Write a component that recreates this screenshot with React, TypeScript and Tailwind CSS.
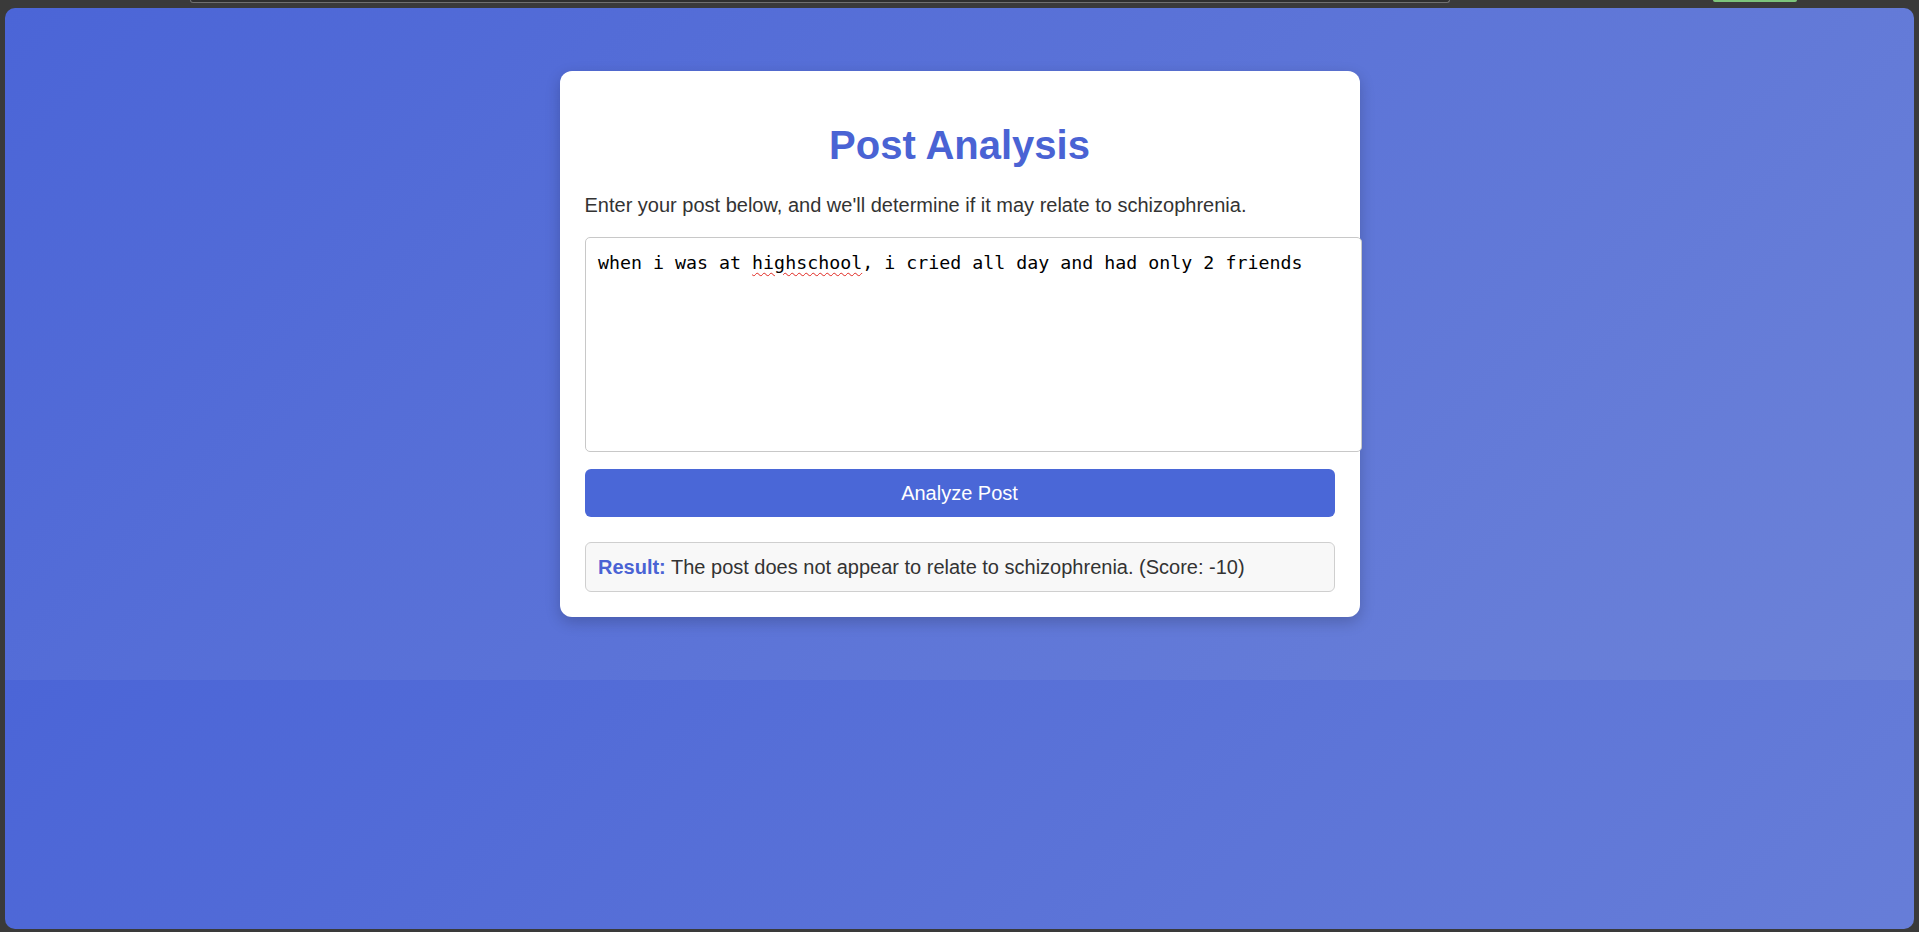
import * as React from "react";

export default function App() {
  return (
    <div className="h-screen w-full bg-[#3a3a3a] flex flex-col overflow-hidden">
      <BrowserChrome />
      <div className="mx-[5px] h-[921px] shrink-0 rounded-[10px] bg-[linear-gradient(135deg,#4b65d7,#6c82d8)] bg-size-[100%_672px] bg-repeat-y flex justify-center items-start pt-[63px]">
        <AnalysisCard />
      </div>
    </div>
  );
}

function BrowserChrome() {
  return (
    <div className="h-[8px] shrink-0 flex items-start">
      <div className="ml-[190px] w-[1260px] h-[3px] border-x border-b border-[#707070] rounded-b-md bg-[#2f2f2f]" />
      <div className="ml-[263px] w-[84px] h-[2px] rounded-b bg-[#7cc47c]" />
    </div>
  );
}

function AnalysisCard() {
  return (
    <div className="w-[800px] bg-white rounded-[12px] p-[25px] shadow-[0_5px_15px_rgba(0,0,0,0.2)] font-['Liberation_Sans',Arial,sans-serif]">
      <h1 className="mt-[26px] text-center text-[40px] leading-[46px] font-bold text-[#4a63d4]">
        Post Analysis
      </h1>
      <p className="mt-[26px] text-[20px] leading-[23px] text-[#333]">
        Enter your post below, and we'll determine if it may relate to
        schizophrenia.
      </p>
      <PostInput />
      <button className="mt-[17.5px] w-full h-[48px] rounded-[6px] bg-[#4a67d7] text-white text-[20px] leading-[23px]">
        Analyze Post
      </button>
      <div className="mt-[25px] border border-[#cfcfcf] bg-[#f8f8f8] rounded-[6px] p-[12.5px] text-[20px] leading-[23px] text-[#333]">
        <span className="font-bold text-[#4a63d4]">Result:</span> The post does
        not appear to relate to schizophrenia. (Score: -10)
      </div>
    </div>
  );
}

function PostInput() {
  return (
    <div className="mt-[20px] w-[777px] h-[214.5px] bg-white border border-[#c8c8c8] rounded-[5px] p-[12.5px] font-['DejaVu_Sans_Mono',monospace] text-[18.3px] leading-[23px] text-black whitespace-pre">
      when i was at{" "}
      <span className="underline decoration-wavy decoration-[#e0261f] decoration-1 underline-offset-[3px]">
        highschool
      </span>
      , i cried all day and had only 2 friends
    </div>
  );
}
